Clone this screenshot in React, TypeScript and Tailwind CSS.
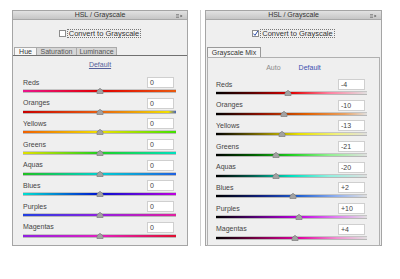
const font = { fontFamily: '"Liberation Sans", Arial, sans-serif' };

type Row = { label: string; value: string; pos: number; grad: string };

const hueRows: Row[] = [
  { label: "Reds", value: "0", pos: 0, grad: "bg-[linear-gradient(to_right,#e8158c,#e00000_50%,#e85a10)]" },
  { label: "Oranges", value: "0", pos: 0, grad: "bg-[linear-gradient(to_right,#c80000,#e86010_50%,#f0e000_95%,#4060c0)]" },
  { label: "Yellows", value: "0", pos: 0, grad: "bg-[linear-gradient(to_right,#f06000,#f0e000_50%,#40e000)]" },
  { label: "Greens", value: "0", pos: 0, grad: "bg-[linear-gradient(to_right,#e0e000,#20d020_50%,#00e0c0)]" },
  { label: "Aquas", value: "0", pos: 0, grad: "bg-[linear-gradient(to_right,#20c020,#00d0d0_50%,#2060e0)]" },
  { label: "Blues", value: "0", pos: 0, grad: "bg-[linear-gradient(to_right,#00e0d0,#0010d0_50%,#c000e0)]" },
  { label: "Purples", value: "0", pos: 0, grad: "bg-[linear-gradient(to_right,#2040e0,#9020e0_50%,#e020a0)]" },
  { label: "Magentas", value: "0", pos: 0, grad: "bg-[linear-gradient(to_right,#9020e0,#e020c0_50%,#e01030)]" },
];

const mixRows: Row[] = [
  { label: "Reds", value: "-4", pos: -4, grad: "bg-[linear-gradient(to_right,#000,#600000_25%,#e00000_50%,#ff80a0_75%,#e0e0e0)]" },
  { label: "Oranges", value: "-10", pos: -10, grad: "bg-[linear-gradient(to_right,#000,#901000_30%,#e06000_60%,#e8a060_85%,#e0e0e0)]" },
  { label: "Yellows", value: "-13", pos: -13, grad: "bg-[linear-gradient(to_right,#000,#807000_30%,#e8e000_55%,#f0f080_80%,#e0e0e0)]" },
  { label: "Greens", value: "-21", pos: -21, grad: "bg-[linear-gradient(to_right,#000,#006000_25%,#20d020_50%,#90f090_75%,#e0e0e0)]" },
  { label: "Aquas", value: "-20", pos: -20, grad: "bg-[linear-gradient(to_right,#000,#006050_25%,#00e0c0_50%,#90f0e0_75%,#e0e0e0)]" },
  { label: "Blues", value: "+2", pos: 2, grad: "bg-[linear-gradient(to_right,#000,#102080_30%,#2060d0_55%,#90b0f0_80%,#e0e0e0)]" },
  { label: "Purples", value: "+10", pos: 10, grad: "bg-[linear-gradient(to_right,#000,#500070_25%,#c000e0_55%,#e080f0_80%,#e0e0e0)]" },
  { label: "Magentas", value: "+4", pos: 4, grad: "bg-[linear-gradient(to_right,#000,#700040_25%,#e000a0_55%,#f090d0_80%,#e0e0e0)]" },
];

const Thumb = () => (
  <svg width="7" height="6" viewBox="0 0 7 6" className="block">
    <path d="M3.5 0.3 L6.7 3 L6.7 5.7 L0.3 5.7 L0.3 3 Z" fill="#a2a2a2" stroke="#6e6e6e" strokeWidth="0.6" />
  </svg>
);

const SliderRow = ({ row }: { row: Row }) => (
  <div className="h-[20.7px] flex flex-col">
    <div className="flex items-center justify-between h-[11px] pr-[2px]">
      <span className="text-[7px] leading-[8px] text-[#444]">{row.label}</span>
      <div className="w-[27px] h-[11px] bg-white border border-[#cfcfcf] text-[7px] leading-[9px] pl-[2px] text-[#444]">
        {row.value}
      </div>
    </div>
    <div className={`relative mt-[2px] h-[2px] shadow-[0_1px_0_#b8b8b8,0_-0.5px_0_#9a9a9a] ${row.grad}`}>
      <div className="absolute top-[-2px] -translate-x-1/2" style={{ left: `${50 + row.pos * 0.5}%` }}>
        <Thumb />
      </div>
    </div>
  </div>
);

const TitleBar = () => (
  <div className="relative h-[9px] border-b border-[#a8a8a8] bg-[linear-gradient(#e2e2e2,#c6c6c6)] flex items-center justify-center">
    <span className="text-[7px] leading-[8px] text-[#333]">HSL / Grayscale</span>
    <svg width="7" height="4" viewBox="0 0 7 4" className="absolute right-[4px] top-[3px]">
      <path d="M0 0.5 H3 M0 2 H3 M0 3.5 H3" stroke="#777" strokeWidth="0.7" />
      <path d="M4.5 0.8 L6.5 2 L4.5 3.2 Z" fill="#555" />
    </svg>
  </div>
);

const Convert = ({ checked }: { checked: boolean }) => (
  <div className="mt-[9px] h-[9px] flex items-center justify-center gap-[1px]">
    <div className="w-[7px] h-[7px] bg-white border border-[#8c8c8c] relative">
      {checked && (
        <svg width="7" height="7" viewBox="0 0 7 7" className="absolute left-[-1px] top-[-1px]">
          <path d="M1.5 3.6 L3 5.4 L5.8 1" stroke="#2c4ea8" strokeWidth="1" fill="none" />
        </svg>
      )}
    </div>
    <span className="border border-dotted border-[#777] text-[7.5px] leading-[7px] px-[1px] text-[#333]">
      Convert to Grayscale
    </span>
  </div>
);

export default function App() {
  return (
    <div className="w-[400px] h-[279px] bg-white flex pt-[10px] pl-[12px]" style={font}>
      <div className="w-[176px] h-[236px] border border-[#a5a5a5] bg-[#efefef] flex flex-col">
        <TitleBar />
        <Convert checked={false} />
        <div className="mt-[9px] h-[9px] flex border-b border-[#707070] pl-[1px]">
          <div className="w-[23px] bg-[#f8f8f8] border-l border-t border-r border-[#aaa] text-[7px] leading-[8px] text-center text-[#333]">
            Hue
          </div>
          <div className="w-[40px] bg-[#d6d6d6] border-t border-r border-[#aaa] text-[7px] leading-[8px] text-center text-[#555]">
            Saturation
          </div>
          <div className="w-[40px] bg-[#d6d6d6] border-t border-r border-[#aaa] text-[7px] leading-[8px] text-center text-[#555]">
            Luminance
          </div>
        </div>
        <div className="mt-[5px] h-[7px] flex justify-center">
          <span className="text-[7px] leading-[7px] text-[#55609a] underline">Default</span>
        </div>
        <div className="mt-[9px] pl-[10px] pr-[11px] flex flex-col">
          {hueRows.map((r) => (
            <SliderRow key={r.label} row={r} />
          ))}
        </div>
      </div>

      <div className="ml-[12px] w-px h-[236px] bg-[#cfcfcf]" />

      <div className="ml-[4px] w-[177px] h-[236px] border border-[#a5a5a5] bg-[#efefef] flex flex-col">
        <TitleBar />
        <Convert checked={true} />
        <div className="mt-[9px] h-[10px] flex pl-[1px]">
          <div className="w-[54px] bg-[#f4f4f4] border-l border-t border-r border-[#9a9a9a] text-[7px] leading-[9px] text-center text-[#333]">
            Grayscale Mix
          </div>
        </div>
        <div className="flex-1 mx-[1px] mb-[1px] border border-[#b0b0b0] flex flex-col">
          <div className="mt-[6px] h-[7px] flex justify-center gap-[18px]">
            <span className="text-[7px] leading-[7px] text-[#8a8a8a]">Auto</span>
            <span className="text-[7px] leading-[7px] text-[#3c50b0]">Default</span>
          </div>
          <div className="mt-[8px] pl-[8px] pr-[12px] flex flex-col">
            {mixRows.map((r) => (
              <SliderRow key={r.label} row={r} />
            ))}
          </div>
        </div>
      </div>
    </div>
  );
}
